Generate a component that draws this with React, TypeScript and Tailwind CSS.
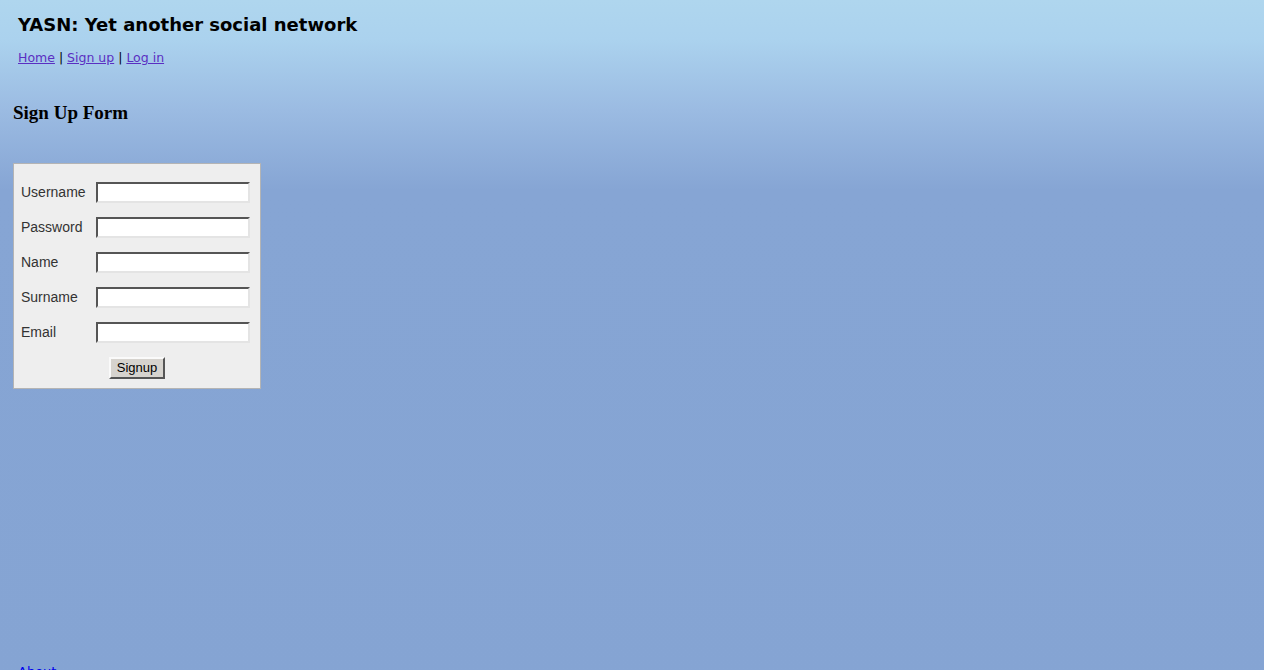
const fields = ["Username", "Password", "Name", "Surname", "Email"];

export default function App() {
  return (
    <div className="min-h-[700px] bg-[linear-gradient(to_bottom,#afd6ee_0px,#abd2ee_40px,#9bbbe2_110px,#86a5d4_190px,#85a4d3_100%)] bg-[#85a4d3] font-['DejaVu_Sans',Verdana,sans-serif]">
      <div className="px-[18px] pt-[14px]">
        <h1 className="text-[18px] font-bold leading-[22px] text-black">YASN: Yet another social network</h1>
        <div className="mt-[14px] text-[12.5px] leading-[16px] text-black">
          <a href="#" className="text-[#5a2fc2] underline">Home</a> |{" "}
          <a href="#" className="text-[#5a2fc2] underline">Sign up</a> |{" "}
          <a href="#" className="text-[#5a2fc2] underline">Log in</a>
        </div>
      </div>

      <h2 className="ml-[13px] mt-[36px] font-['Liberation_Serif',serif] text-[19px] font-bold leading-[22px] text-black">
        Sign Up Form
      </h2>

      <form className="ml-[13px] mt-[39px] w-[248px] border border-[#b4b4b4] bg-[#eeeeee] pb-[9px] pt-[18px] font-['Liberation_Sans',Arial,sans-serif] text-[14px] text-[#333]">
        <div className="flex flex-col gap-[14px]">
          {fields.map((f) => (
            <div key={f} className="flex h-[21px] items-center">
              <label className="w-[82px] pl-[7px]">{f}</label>
              <input
                type={f === "Password" ? "password" : "text"}
                className="h-[21px] w-[154px] border-2 border-b-[#e4e4e4] border-l-[#555] border-r-[#e4e4e4] border-t-[#555] bg-white outline-none"
              />
            </div>
          ))}
        </div>
        <div className="mt-[14px] flex justify-center">
          <button
            type="button"
            className="h-[22px] w-[56px] border-2 border-b-[#555] border-l-[#fafafa] border-r-[#555] border-t-[#fafafa] bg-[#d6d3ce] font-['Liberation_Sans',Arial,sans-serif] text-[13px] leading-[16px] text-black"
          >
            Signup
          </button>
        </div>
      </form>

      <div className="ml-[18px] mt-[273px] text-[13px]">
        <a href="#" className="text-[#0000ee] underline">About</a>
      </div>
    </div>
  );
}
